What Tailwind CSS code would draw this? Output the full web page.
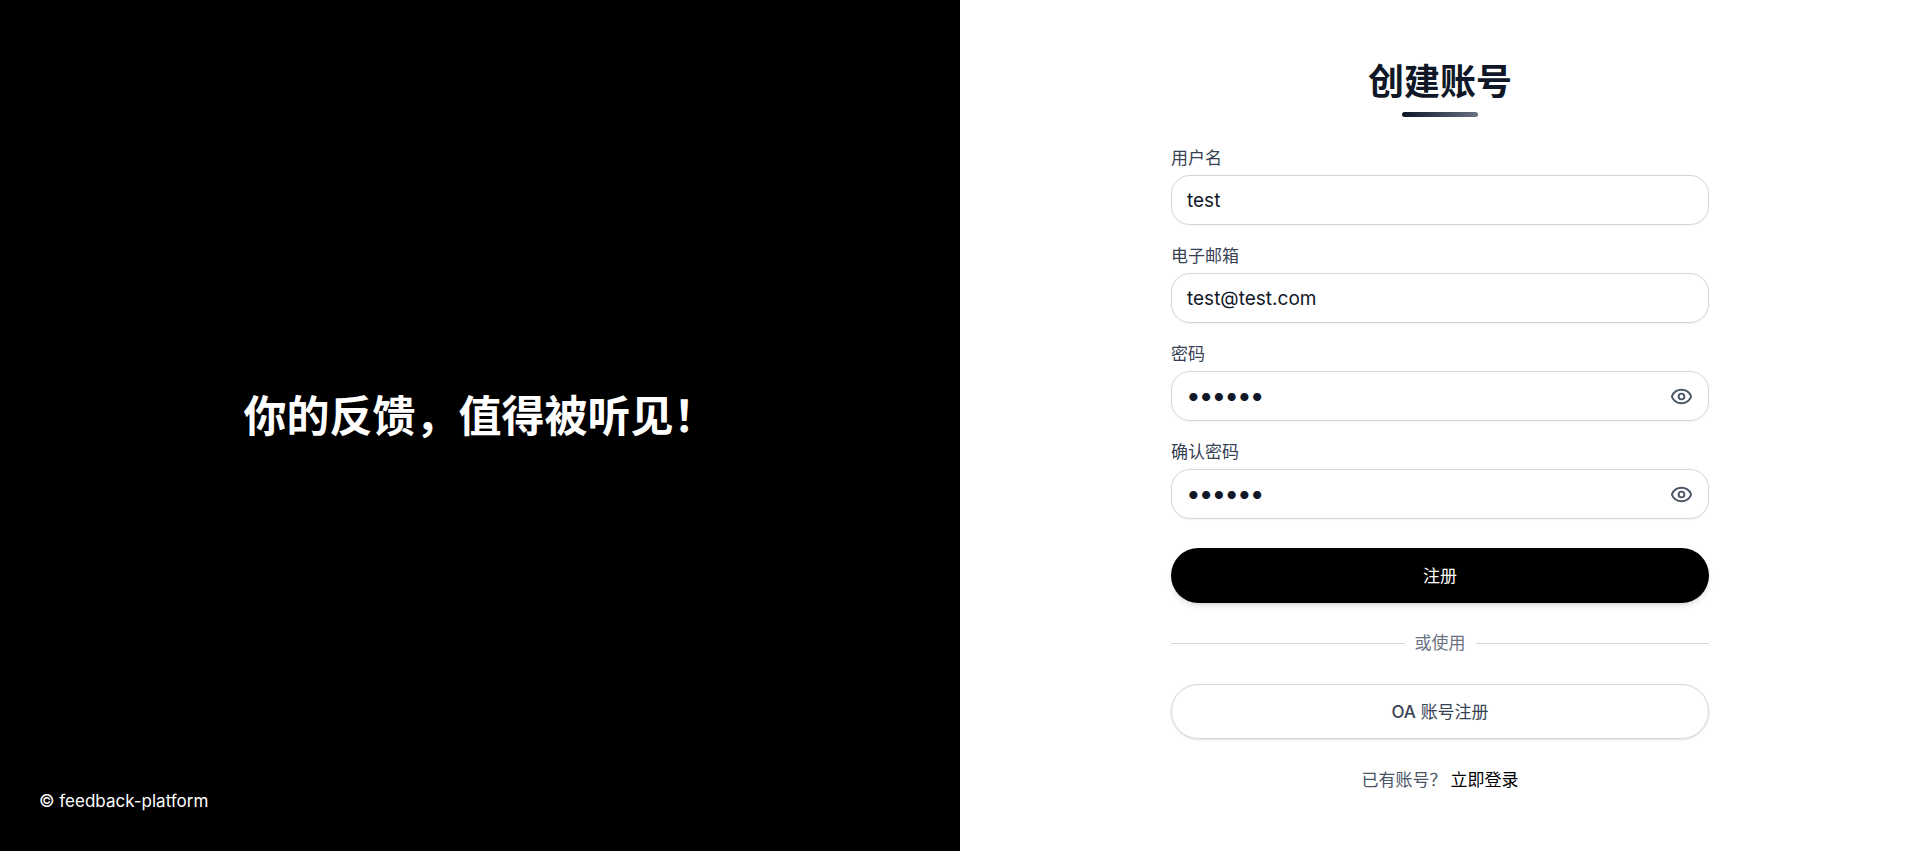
<!DOCTYPE html>
<html lang="zh-CN">

<head>
    <meta charset="UTF-8">
    <meta name="viewport" content="width=device-width, initial-scale=1.0">
    <title>创建账号</title>
    <script src="https://cdn.jsdelivr.net/npm/@tailwindcss/browser@4"></script>
</head>

<body class="font-['Inter','Noto_Sans_CJK_SC',sans-serif] text-[17px] leading-6">
    <div class="grid min-h-screen md:grid-cols-2">
        <!-- slogan -->
        <div class="flex flex-col bg-black text-white px-[39px] pt-[42px] pb-[38px]">
            <div class="flex flex-1 items-center justify-center">
                <h1 class="text-[43px] leading-[54px] font-bold">你的反馈，值得被听见！</h1>
            </div>
            <p>© feedback-platform</p>
        </div>

        <!-- register form -->
        <div class="flex items-center justify-center bg-white px-6 pt-[41px] pb-10">
            <div class="flex w-full max-w-[538px] flex-col gap-[29px]">
                <div class="flex flex-col items-center gap-[7px]">
                    <h2 class="text-[36px] leading-[45px] font-bold text-[#101828]">创建账号</h2>
                    <div class="h-[5px] w-[76px] rounded-full bg-linear-to-r from-[#101828] to-[#6a7282]"></div>
                </div>

                <form class="flex flex-col gap-[29px]">
                    <div class="flex flex-col gap-[19px]">
                        <div class="flex flex-col gap-[5px]">
                            <label for="username" class="text-[#364153]">用户名</label>
                            <input type="text" id="username" value="test" class="h-[50px] w-full rounded-[19px] border border-gray-300 px-[15px] text-[19px] text-[#101828] shadow-xs">
                        </div>
                        <div class="flex flex-col gap-[5px]">
                            <label for="email" class="text-[#364153]">电子邮箱</label>
                            <input type="email" id="email" value="test@test.com" class="h-[50px] w-full rounded-[19px] border border-gray-300 px-[15px] text-[19px] text-[#101828] shadow-xs">
                        </div>
                        <div class="flex flex-col gap-[5px]">
                            <label for="password" class="text-[#364153]">密码</label>
                            <div class="flex h-[50px] items-center rounded-[19px] border border-gray-300 px-[15px] shadow-xs">
                                <input type="password" id="password" value="123456" class="min-w-0 flex-1 font-['Lato',sans-serif] text-[22px] text-[#101828] outline-none">
                                <button type="button" aria-label="显示密码" class="toggle text-[#4a5565]">
                                    <svg class="size-[23px]" viewBox="0 0 24 24" fill="none" stroke="currentColor" stroke-width="2" stroke-linecap="round" stroke-linejoin="round">
                                        <path d="M2.062 12.348a1 1 0 0 1 0-.696 10.75 10.75 0 0 1 19.876 0 1 1 0 0 1 0 .696 10.75 10.75 0 0 1-19.876 0" />
                                        <circle cx="12" cy="12" r="3" />
                                    </svg>
                                </button>
                            </div>
                        </div>
                        <div class="flex flex-col gap-[5px]">
                            <label for="confirm" class="text-[#364153]">确认密码</label>
                            <div class="flex h-[50px] items-center rounded-[19px] border border-gray-300 px-[15px] shadow-xs">
                                <input type="password" id="confirm" value="123456" class="min-w-0 flex-1 font-['Lato',sans-serif] text-[22px] text-[#101828] outline-none">
                                <button type="button" aria-label="显示密码" class="toggle text-[#4a5565]">
                                    <svg class="size-[23px]" viewBox="0 0 24 24" fill="none" stroke="currentColor" stroke-width="2" stroke-linecap="round" stroke-linejoin="round">
                                        <path d="M2.062 12.348a1 1 0 0 1 0-.696 10.75 10.75 0 0 1 19.876 0 1 1 0 0 1 0 .696 10.75 10.75 0 0 1-19.876 0" />
                                        <circle cx="12" cy="12" r="3" />
                                    </svg>
                                </button>
                            </div>
                        </div>
                    </div>
                    <button type="submit" class="h-[55px] rounded-full bg-black text-white shadow-md">注册</button>
                </form>

                <div class="flex items-center gap-[10px] leading-[23px] text-[#6a7282]">
                    <div class="h-px flex-1 bg-gray-300"></div>
                    <span>或使用</span>
                    <div class="h-px flex-1 bg-gray-300"></div>
                </div>

                <button type="button" class="h-[55px] rounded-full border border-gray-300 text-[#364153] shadow-sm"><span class="font-medium">OA</span> 账号注册</button>

                <p class="flex justify-center gap-1 text-[#4a5565]">
                    已有账号？
                    <a href="#" class="text-black">立即登录</a>
                </p>
            </div>
        </div>
    </div>
    <script>
        // show or hide the password next to the clicked eye
        document.querySelectorAll(".toggle").forEach(btn => {
            btn.addEventListener("click", () => {
                const input = btn.previousElementSibling
                input.type = input.type === "password" ? "text" : "password"
            })
        })
    </script>
</body>

</html>
